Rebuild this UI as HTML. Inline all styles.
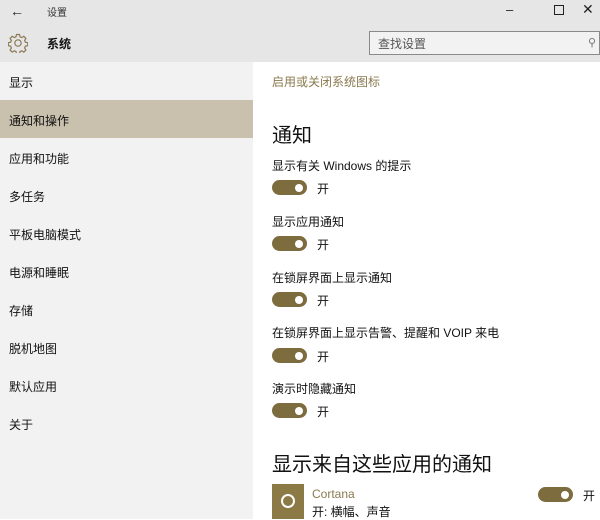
<!DOCTYPE html>
<html><head><meta charset="utf-8"><style>
*{margin:0;padding:0;box-sizing:border-box}
body{width:600px;height:519px;overflow:hidden;background:#fff;font-family:"Liberation Sans","Noto Sans CJK SC",sans-serif;color:#000;position:relative}
.a{position:absolute;white-space:nowrap}
.hdr{left:0;top:0;width:600px;height:62px;background:#e6e6e6}
.side{left:0;top:62px;width:253px;height:457px;background:#f2f2f2}
.sel{left:0;top:100px;width:253px;height:38px;background:#c9c1ae}
.ni{left:9px;font-size:12px;color:#111}
.lbl{left:272px;font-size:12px;color:#111}
.tg{left:272px;width:35px;height:15px;border-radius:8px;background:#7d6c3e}
.tg::after{content:"";position:absolute;right:4px;top:3.5px;width:8px;height:8px;border-radius:50%;background:#fff}
.on{left:317px;font-size:12px;color:#111}
</style></head><body>
<div class="a hdr"></div>
<div class="a" style="left:10px;top:3px;font-size:14px;color:#222">←</div>
<div class="a" style="left:47px;top:4px;font-size:10px;color:#333">设置</div>
<div class="a" style="left:506px;top:2px;font-size:13px;color:#222">–</div>
<div class="a" style="left:554px;top:5px;width:10px;height:10px;border:1px solid #222"></div>
<div class="a" style="left:582px;top:1px;font-size:14px;color:#222">✕</div>
<svg class="a" style="left:8px;top:33px" width="20" height="20" viewBox="0 0 20 20"><g fill="none" stroke="#8a7a55" stroke-width="1.2"><circle cx="10" cy="10" r="3.2"/><path d="M8.5 1.5h3l.5 2.3 1.8.8 2-1.3 2.1 2.1-1.3 2 .8 1.8 2.3.5v3l-2.3.5-.8 1.8 1.3 2-2.1 2.1-2-1.3-1.8.8-.5 2.3h-3l-.5-2.3-1.8-.8-2 1.3-2.1-2.1 1.3-2-.8-1.8-2.3-.5v-3l2.3-.5.8-1.8-1.3-2 2.1-2.1 2 1.3 1.8-.8z"/></g></svg>
<div class="a" style="left:47px;top:35px;font-size:12px;font-weight:bold;color:#111">系统</div>
<div class="a" style="left:369px;top:31px;width:231px;height:24px;border:1px solid #8a8a8a;background:#f2f2f2"></div>
<div class="a" style="left:378px;top:35px;font-size:12px;color:#555">查找设置</div>
<div class="a" style="left:588px;top:36px;font-size:11px;color:#777">⚲</div>
<div class="a side"></div>
<div class="a sel"></div>
<div class="a ni" style="top:74px">显示</div>
<div class="a ni" style="top:112px">通知和操作</div>
<div class="a ni" style="top:150px">应用和功能</div>
<div class="a ni" style="top:188px">多任务</div>
<div class="a ni" style="top:226px">平板电脑模式</div>
<div class="a ni" style="top:264px">电源和睡眠</div>
<div class="a ni" style="top:302px">存储</div>
<div class="a ni" style="top:340px">脱机地图</div>
<div class="a ni" style="top:378px">默认应用</div>
<div class="a ni" style="top:416px">关于</div>
<div class="a" style="left:272px;top:73px;font-size:12px;color:#8a7a4f">启用或关闭系统图标</div>
<div class="a" style="left:272px;top:119px;font-size:20px;color:#111">通知</div>
<div class="a lbl" style="top:157px">显示有关 Windows 的提示</div>
<div class="a tg" style="top:180px"></div><div class="a on" style="top:180px">开</div>
<div class="a lbl" style="top:213px">显示应用通知</div>
<div class="a tg" style="top:236px"></div><div class="a on" style="top:236px">开</div>
<div class="a lbl" style="top:269px">在锁屏界面上显示通知</div>
<div class="a tg" style="top:292px"></div><div class="a on" style="top:292px">开</div>
<div class="a lbl" style="top:324px">在锁屏界面上显示告警、提醒和 VOIP 来电</div>
<div class="a tg" style="top:348px"></div><div class="a on" style="top:348px">开</div>
<div class="a lbl" style="top:380px">演示时隐藏通知</div>
<div class="a tg" style="top:403px"></div><div class="a on" style="top:403px">开</div>
<div class="a" style="left:272px;top:448px;font-size:20px;color:#111">显示来自这些应用的通知</div>
<div class="a" style="left:272px;top:484px;width:32px;height:35px;background:#8b7a45"></div>
<div class="a" style="left:281px;top:494px;width:14px;height:14px;border:2px solid #fff;border-radius:50%"></div>
<div class="a" style="left:312px;top:487px;font-size:12px;color:#8a7a4f">Cortana</div>
<div class="a" style="left:312px;top:503px;font-size:12px;color:#111">开: 横幅、声音</div>
<div class="a tg" style="left:538px;top:487px"></div>
<div class="a on" style="left:583px;top:487px">开</div>
</body></html>
